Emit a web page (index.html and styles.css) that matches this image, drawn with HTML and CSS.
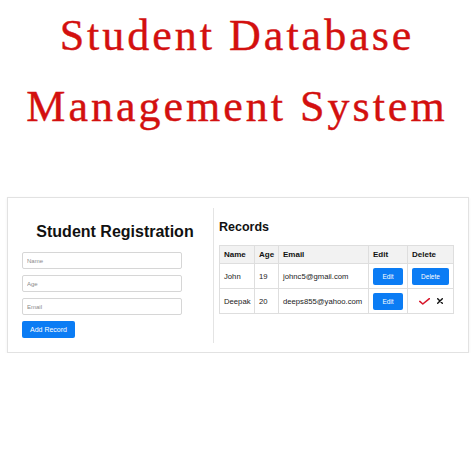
FILE: index.html
```html
<!DOCTYPE html>
<html lang="en">
<head>
    <meta charset="UTF-8">
    <meta name="viewport" content="width=device-width, initial-scale=1.0">
    <title>Student Database Management System</title>
    <link rel="stylesheet" href="styles.css">
</head>
<body>
    <h1 class="title">Student Database<br>Management System</h1>

    <div class="container">
        <div class="form-panel">
            <h2>Student Registration</h2>
            <input type="text" placeholder="Name">
            <input type="text" placeholder="Age">
            <input type="text" placeholder="Email">
            <button class="btn add-btn">Add Record</button>
        </div>

        <div class="records-panel">
            <h3>Records</h3>
            <table class="records">
                <thead>
                    <tr>
                        <th class="col-name">Name</th>
                        <th class="col-age">Age</th>
                        <th class="col-email">Email</th>
                        <th class="col-edit">Edit</th>
                        <th class="col-delete">Delete</th>
                    </tr>
                </thead>
                <tbody>
                    <tr>
                        <td>John</td>
                        <td>19</td>
                        <td>johnc5@gmail.com</td>
                        <td><button class="btn edit-btn">Edit</button></td>
                        <td><button class="btn delete-btn">Delete</button></td>
                    </tr>
                    <tr>
                        <td>Deepak</td>
                        <td>20</td>
                        <td>deeps855@yahoo.com</td>
                        <td><button class="btn edit-btn">Edit</button></td>
                        <td>
                            <div class="confirm">
                                <!-- confirm / cancel delete -->
                                <svg class="tick" width="11" height="7" viewBox="0 0 11 7">
                                    <path d="M0.8 3.4 L3.8 6 L10.4 0.6" fill="none" stroke="#d8172b" stroke-width="1.6" stroke-linecap="round" stroke-linejoin="round"/>
                                </svg>
                                <svg class="cross" width="6" height="6" viewBox="0 0 6 6">
                                    <path d="M0.7 0.7 L5.3 5.3 M5.3 0.7 L0.7 5.3" stroke="#111" stroke-width="1.4" stroke-linecap="round"/>
                                </svg>
                            </div>
                        </td>
                    </tr>
                </tbody>
            </table>
        </div>
    </div>
</body>
</html>
```

FILE: styles.css
```css
body {
    margin: 0;
    padding: 0;
    background-color: #fff;
    font-family: "Liberation Sans", Arial, sans-serif;
    color: #111;
}

.title {
    margin: 0;
    text-align: center;
    font-family: "Liberation Serif", "Times New Roman", serif;
    font-weight: normal;
    font-size: 44px;
    line-height: 71px;
    letter-spacing: 3px;
    color: #d3100f;
    -webkit-text-stroke: 0.4px #d3100f;
}

.container {
    display: flex;
    margin: 55px 5px 0 7px;
    padding: 10px 0 9px 0;
    border: 1px solid #e2e2e2;
    box-shadow: 0 1px 3px rgba(0, 0, 0, 0.06);
    background-color: #fff;
}

.form-panel {
    flex: 0 0 186px;
    padding: 15px 5px 5px 14px;
    border-right: 1px solid #e4e4e4;
}

.form-panel h2 {
    margin: 0 0 11px 0;
    font-size: 16px;
    text-align: center;
    color: #111;
}

.form-panel input {
    display: block;
    width: 160px;
    height: 17px;
    box-sizing: border-box;
    margin: 0 0 6px 0;
    padding: 0 4px;
    border: 1px solid #d6d6d6;
    border-radius: 2px;
    font-family: "Liberation Sans", Arial, sans-serif;
    font-size: 6px;
}

.form-panel input::placeholder {
    color: #8a8a8a;
}

.btn {
    border: none;
    border-radius: 2px;
    background-color: #0b7cf4;
    color: #fff;
    font-family: "Liberation Sans", Arial, sans-serif;
    font-size: 6.5px;
    padding: 0;
    cursor: pointer;
}

.add-btn {
    display: block;
    width: 53px;
    height: 17px;
    font-size: 7px;
}

.records-panel {
    flex: 1;
    padding: 12px 0 0 5px;
}

.records-panel h3 {
    margin: 0 0 11px 0;
    font-size: 12.5px;
    color: #111;
}

.records {
    border-collapse: collapse;
    table-layout: fixed;
    width: 234px;
}

.records th,
.records td {
    border: 1px solid #dedede;
    padding: 0 4px;
    text-align: left;
    vertical-align: middle;
    white-space: nowrap;
}

.records th {
    height: 17px;
    background-color: #f2f2f2;
    font-size: 8px;
    color: #111;
}

.records td {
    height: 24px;
    font-size: 7.7px;
    color: #222;
}

.col-name { width: 26px; }
.col-age { width: 15px; }
.col-email { width: 81px; }
.col-edit { width: 30px; }
.col-delete { width: 37px; }

.edit-btn {
    display: block;
    width: 30px;
    height: 17px;
}

.delete-btn {
    display: block;
    width: 37px;
    height: 17px;
}

.confirm {
    display: flex;
    justify-content: center;
    align-items: center;
    gap: 7px;
}
```
